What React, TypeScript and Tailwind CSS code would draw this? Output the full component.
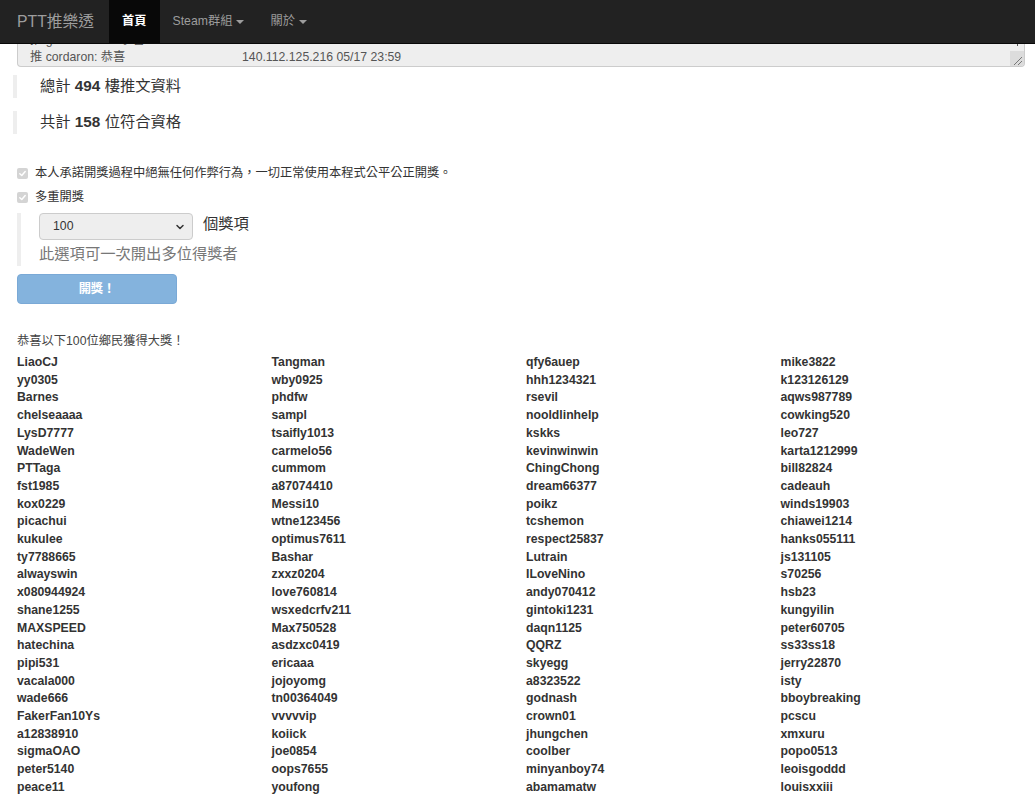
import React from "react";

const col1 = ["LiaoCJ","yy0305","Barnes","chelseaaaa","LysD7777","WadeWen","PTTaga","fst1985","kox0229","picachui","kukulee","ty7788665","alwayswin","x080944924","shane1255","MAXSPEED","hatechina","pipi531","vacala000","wade666","FakerFan10Ys","a12838910","sigmaOAO","peter5140","peace11"];
const col2 = ["Tangman","wby0925","phdfw","sampl","tsaifly1013","carmelo56","cummom","a87074410","Messi10","wtne123456","optimus7611","Bashar","zxxz0204","love760814","wsxedcrfv211","Max750528","asdzxc0419","ericaaa","jojoyomg","tn00364049","vvvvvip","koiick","joe0854","oops7655","youfong"];
const col3 = ["qfy6auep","hhh1234321","rsevil","nooldlinhelp","kskks","kevinwinwin","ChingChong","dream66377","poikz","tcshemon","respect25837","Lutrain","ILoveNino","andy070412","gintoki1231","daqn1125","QQRZ","skyegg","a8323522","godnash","crown01","jhungchen","coolber","minyanboy74","abamamatw"];
const col4 = ["mike3822","k123126129","aqws987789","cowking520","leo727","karta1212999","bill82824","cadeauh","winds19903","chiawei1214","hanks055111","js131105","s70256","hsb23","kungyilin","peter60705","ss33ss18","jerry22870","isty","bboybreaking","pcscu","xmxuru","popo0513","leoisgoddd","louisxxiii"];

const font = { fontFamily: '"Liberation Sans", Arial, "Noto Sans CJK TC", sans-serif' };

function Caret() {
  return (
    <span className="inline-block w-0 h-0 ml-[4px] align-middle border-t-[4px] border-t-current border-x-[4px] border-x-transparent" />
  );
}

function Check() {
  return (
    <span className="inline-flex items-center justify-center w-[11px] h-[11px] rounded-[2px] bg-[#d4d4d4] shrink-0">
      <svg width="9" height="9" viewBox="0 0 10 10" fill="none">
        <path d="M2 5.2 L4.2 7.3 L8 2.8" stroke="#ffffff" strokeWidth="1.6" strokeLinecap="round" strokeLinejoin="round" />
      </svg>
    </span>
  );
}

export default function App() {
  return (
    <div className="h-[800px] overflow-hidden bg-white text-[#333]" style={font}>
      {/* Navbar */}
      <div className="h-[44px] bg-[#222] border-b border-[#080808] flex items-stretch pl-[17px]">
        <div className="flex items-center text-[15.75px] text-[#9d9d9d] pr-[15px]">PTT推樂透</div>
        <div className="flex items-center bg-[#080808] text-white font-bold text-[12.25px] px-[13px]">首頁</div>
        <div className="flex items-center text-[#9d9d9d] text-[12.25px] px-[13px]">Steam群組<Caret /></div>
        <div className="flex items-center text-[#9d9d9d] text-[12.25px] px-[13px]">關於<Caret /></div>
      </div>

      {/* Textarea remnant */}
      <div className="ml-[17px] mr-[10px] h-[23px] bg-[#eee] border-x border-b border-[#ccc] rounded-b-[4px] overflow-hidden relative">
        <div className="flex flex-col justify-end h-full text-[12.25px] text-[#555] leading-[17.7px] pl-[12px] translate-y-[1px]">
          <div className="flex"><span className="w-[212px]">推 gooo200200: 恭喜</span><span>49.216.161.188 05/17 23:54</span></div>
          <div className="flex"><span className="w-[212px]">推 cordaron: 恭喜</span><span>140.112.125.216 05/17 23:59</span></div>
        </div>
        <div className="absolute right-0 top-0 w-[14px] h-full">
          <div className="absolute left-[7px] top-0 w-[1px] h-[2px] bg-[#555]" />
          <div className="absolute bottom-0 left-0 w-[14px] h-[15px] bg-[#dcdcdc]">
            <svg width="14" height="15" viewBox="0 0 14 15" className="absolute inset-0">
              <path d="M12 6 L4 14 M12 10 L8 14" stroke="#777" strokeWidth="1" />
            </svg>
          </div>
        </div>
      </div>

      {/* Stats */}
      <div className="mt-[8px] ml-[13px] flex flex-col gap-[13px]">
        <div className="border-l-[4px] border-[#eee] h-[23px] flex items-center pl-[23px] text-[15.3px] text-[#333]">
          總計&nbsp;<b>494</b>&nbsp;樓推文資料
        </div>
        <div className="border-l-[4px] border-[#eee] h-[23px] flex items-center pl-[23px] text-[15.3px] text-[#333]">
          共計&nbsp;<b>158</b>&nbsp;位符合資格
        </div>
      </div>

      {/* Checkboxes */}
      <div className="ml-[17px] mt-[31px] flex flex-col gap-[7px] text-[12.25px] text-[#333]">
        <div className="flex items-center gap-[7px] h-[17px]"><Check />本人承諾開獎過程中絕無任何作弊行為，一切正常使用本程式公平公正開獎。</div>
        <div className="flex items-center gap-[7px] h-[17px]"><Check />多重開獎</div>
      </div>

      {/* Multi options */}
      <div className="ml-[17px] mt-[7px] border-l-[4px] border-[#eee] pl-[18px] h-[53px]">
        <div className="flex items-center gap-[10px]">
          <div className="w-[154px] h-[27px] bg-[#eee] border border-[#ccc] rounded-[4px] flex items-center justify-between pl-[13px] pr-[7px] text-[12.25px] text-[#333]">
            <span>100</span>
            <svg width="10" height="10" viewBox="0 0 10 10" fill="none">
              <path d="M2 3.5 L5 6.5 L8 3.5" stroke="#333" strokeWidth="1.5" strokeLinecap="round" strokeLinejoin="round" />
            </svg>
          </div>
          <span className="text-[15.3px] text-[#333] -mt-[5px]">個獎項</span>
        </div>
        <div className="text-[15.3px] text-[#777] mt-[4px] leading-[20px]">此選項可一次開出多位得獎者</div>
      </div>

      {/* Button */}
      <div className="ml-[17px] mt-[8px] w-[160px] h-[30px] rounded-[4px] bg-[#84b3dd] border border-[#7aa9d6] flex items-center justify-center text-white text-[12.25px] font-bold">
        開獎！
      </div>

      {/* Winners */}
      <div className="ml-[17px] mt-[28px] text-[12.25px] text-[#444] leading-[18px]">恭喜以下100位鄉民獲得大獎！</div>
      <div className="pl-[17px] mt-[4px] grid grid-cols-4 text-[12.25px] font-bold text-[#333] leading-[17.71px]">
        {[col1, col2, col3, col4].map((c, i) => (
          <div key={i} className="flex flex-col">
            {c.map((n) => (
              <div key={n}>{n}</div>
            ))}
          </div>
        ))}
      </div>
    </div>
  );
}
